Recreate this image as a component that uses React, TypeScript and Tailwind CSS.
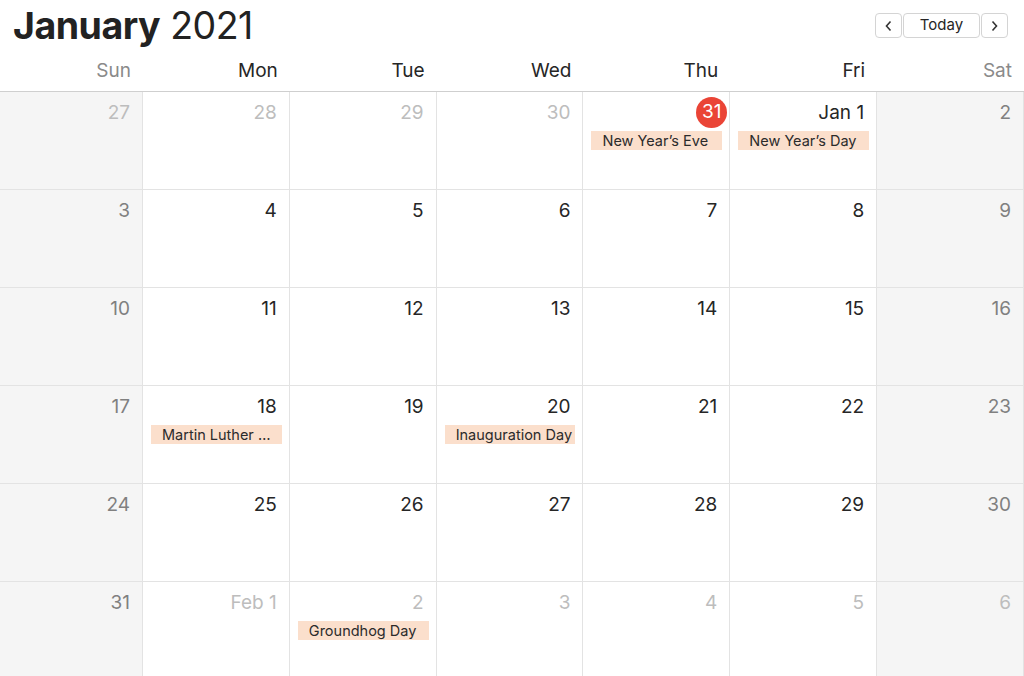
const weekdays = ["Sun", "Mon", "Tue", "Wed", "Thu", "Fri", "Sat"];

type Day = { label: string; muted?: boolean; today?: boolean; event?: string };

const weeks: Day[][] = [
  [
    { label: "27", muted: true },
    { label: "28", muted: true },
    { label: "29", muted: true },
    { label: "30", muted: true },
    { label: "31", today: true, event: "New Year’s Eve" },
    { label: "Jan 1", event: "New Year’s Day" },
    { label: "2" },
  ],
  [{ label: "3" }, { label: "4" }, { label: "5" }, { label: "6" }, { label: "7" }, { label: "8" }, { label: "9" }],
  [{ label: "10" }, { label: "11" }, { label: "12" }, { label: "13" }, { label: "14" }, { label: "15" }, { label: "16" }],
  [
    { label: "17" },
    { label: "18", event: "Martin Luther King Jr. Day" },
    { label: "19" },
    { label: "20", event: "Inauguration Day" },
    { label: "21" },
    { label: "22" },
    { label: "23" },
  ],
  [{ label: "24" }, { label: "25" }, { label: "26" }, { label: "27" }, { label: "28" }, { label: "29" }, { label: "30" }],
  [
    { label: "31" },
    { label: "Feb 1", muted: true },
    { label: "2", muted: true, event: "Groundhog Day" },
    { label: "3", muted: true },
    { label: "4", muted: true },
    { label: "5", muted: true },
    { label: "6", muted: true },
  ],
];

function Cell({ day, weekend }: { day: Day; weekend: boolean }) {
  let color = "text-[#262626]";
  if (weekend) color = "text-[#808080]";
  if (day.muted) color = "text-[#bdbdbd]";
  return (
    <div className={`flex h-[98px] min-w-0 flex-col border-b border-r border-[#e3e3e3] ${weekend ? "bg-[#f5f5f5]" : "bg-white"}`}>
      <div className="flex justify-end pr-[12px] pt-[5px]">
        {day.today ? (
          <span className="mr-[-10px] flex h-[31px] w-[31px] items-center justify-center rounded-full bg-[#ea4436] text-[19px] text-white">
            {day.label}
          </span>
        ) : (
          <span className={`h-[31px] text-[19px] leading-[31px] ${color}`}>{day.label}</span>
        )}
      </div>
      {day.event && (
        <div className="ml-[8px] mr-[7px] mt-[3px] h-[19px] truncate bg-[#fbdfcc] pl-[11px] pr-[3px] text-[14.5px] leading-[19px] text-[#2b2b2b]">
          {day.event}
        </div>
      )}
    </div>
  );
}

export default function App() {
  return (
    <div className="h-[676px] w-[1024px] overflow-hidden bg-white font-['Inter',sans-serif]">
      <div className="flex h-[58px] items-start justify-between pl-[13px] pr-[16px]">
        <h1 className="mt-[2px] text-[37.5px] leading-[48px] tracking-[-0.5px] text-[#222]">
          <span className="font-bold">January</span> 2021
        </h1>
        <div className="mt-[13px] flex gap-[1px]">
          <button className="flex h-[25px] w-[27px] items-center justify-center rounded-[4px] border border-[#d4d4d4] bg-white text-[#333]">
            <svg width="9" height="12" viewBox="0 0 9 12" fill="none" stroke="currentColor" strokeWidth="1.6">
              <path d="M6.5 1.5 L2.5 6 L6.5 10.5" />
            </svg>
          </button>
          <button className="h-[25px] w-[77px] rounded-[4px] border border-[#d4d4d4] bg-white text-[15px] text-[#262626]">
            Today
          </button>
          <button className="flex h-[25px] w-[27px] items-center justify-center rounded-[4px] border border-[#d4d4d4] bg-white text-[#333]">
            <svg width="9" height="12" viewBox="0 0 9 12" fill="none" stroke="currentColor" strokeWidth="1.6">
              <path d="M2.5 1.5 L6.5 6 L2.5 10.5" />
            </svg>
          </button>
        </div>
      </div>
      <div className="grid h-[34px] grid-cols-[143px_repeat(6,minmax(0,1fr))] border-b border-[#cfcfcf]">
        {weekdays.map((d, i) => (
          <div
            key={d}
            className={`pr-[12px] pt-[1px] text-right text-[19px] leading-[24px] ${i === 0 || i === 6 ? "text-[#8a8a8a]" : "text-[#262626]"}`}
          >
            {d}
          </div>
        ))}
      </div>
      <div className="grid grid-cols-[143px_repeat(6,minmax(0,1fr))]">
        {weeks.map((week, wi) =>
          week.map((day, di) => <Cell key={`${wi}-${di}`} day={day} weekend={di === 0 || di === 6} />)
        )}
      </div>
    </div>
  );
}
